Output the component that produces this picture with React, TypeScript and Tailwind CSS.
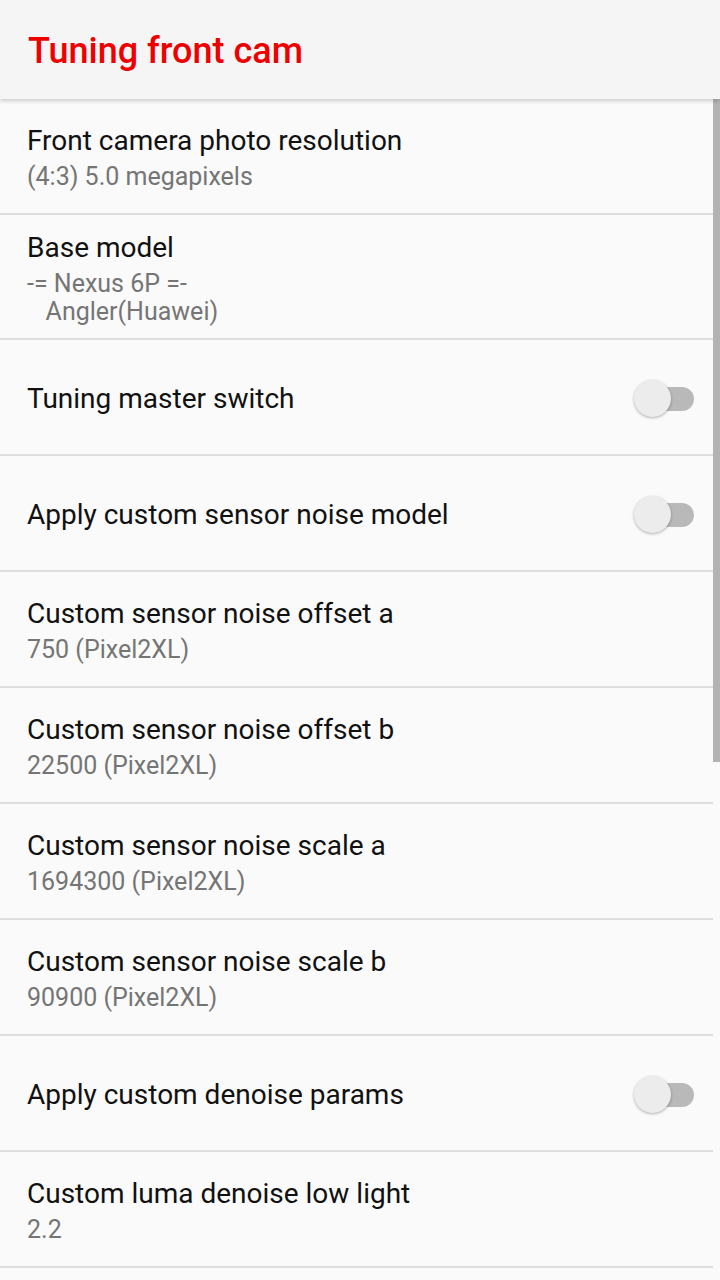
import React from "react";

type Item = {
  title: string;
  summary?: string[];
  toggle?: boolean;
  height: string;
};

const items: Item[] = [
  { title: "Front camera photo resolution", summary: ["(4:3) 5.0 megapixels"], height: "h-[114px]" },
  { title: "Base model", summary: ["-= Nexus 6P =-", "\u00a0\u00a0\u00a0Angler(Huawei)"], height: "h-[123px]" },
  { title: "Tuning master switch", toggle: true, height: "h-[114px]" },
  { title: "Apply custom sensor noise model", toggle: true, height: "h-[114px]" },
  { title: "Custom sensor noise offset a", summary: ["750 (Pixel2XL)"], height: "h-[114px]" },
  { title: "Custom sensor noise offset b", summary: ["22500 (Pixel2XL)"], height: "h-[114px]" },
  { title: "Custom sensor noise scale a", summary: ["1694300 (Pixel2XL)"], height: "h-[114px]" },
  { title: "Custom sensor noise scale b", summary: ["90900 (Pixel2XL)"], height: "h-[114px]" },
  { title: "Apply custom denoise params", toggle: true, height: "h-[114px]" },
  { title: "Custom luma denoise low light", summary: ["2.2"], height: "h-[114px]" },
];

function Switch() {
  return (
    <div className="relative w-[60px] h-[38px] flex items-center">
      <div className="ml-[6px] w-[54px] h-[24px] rounded-full bg-[#b9b9b9]" />
      <div className="absolute left-0 top-0 w-[37px] h-[37px] rounded-full bg-[#ececec] shadow-[0_1px_3px_rgba(0,0,0,0.3)]" />
    </div>
  );
}

export default function App() {
  return (
    <div
      className="w-[720px] h-[1280px] overflow-hidden bg-[#fafafa] flex flex-col"
      style={{ fontFamily: "Roboto, 'Noto Sans', sans-serif" }}
    >
      <header className="relative z-10 h-[99px] shrink-0 bg-[#f5f5f5] flex items-center px-[28px] shadow-[0_2px_4px_rgba(0,0,0,0.18)]">
        <h1 className="text-[36px] font-medium text-[#ee0000] leading-none mt-[3px]">
          Tuning front cam
        </h1>
      </header>
      <div className="flex flex-1 min-h-0">
        <div className="flex-1 flex flex-col">
          {items.map((it) => (
            <div key={it.title} className="flex flex-col">
              <div className={`${it.height} flex items-center pl-[27px] pr-[19px] pt-[3px]`}>
                <div className="flex-1 flex flex-col">
                  <div className="text-[28px] leading-[34px] text-[#111]">{it.title}</div>
                  <div className="flex flex-col mt-[5px] empty:hidden">
                    {it.summary?.map((s) => (
                      <div key={s} className="text-[25px] leading-[28px] text-[#757575] whitespace-pre">
                        {s}
                      </div>
                    ))}
                  </div>
                </div>
                {it.toggle && <Switch />}
              </div>
              <div className="h-[2px] bg-[#dedede]" />
            </div>
          ))}
        </div>
        <div className="w-[7px] shrink-0 flex flex-col">
          <div className="h-[663px] bg-[#b3b3b3]" />
        </div>
      </div>
    </div>
  );
}
